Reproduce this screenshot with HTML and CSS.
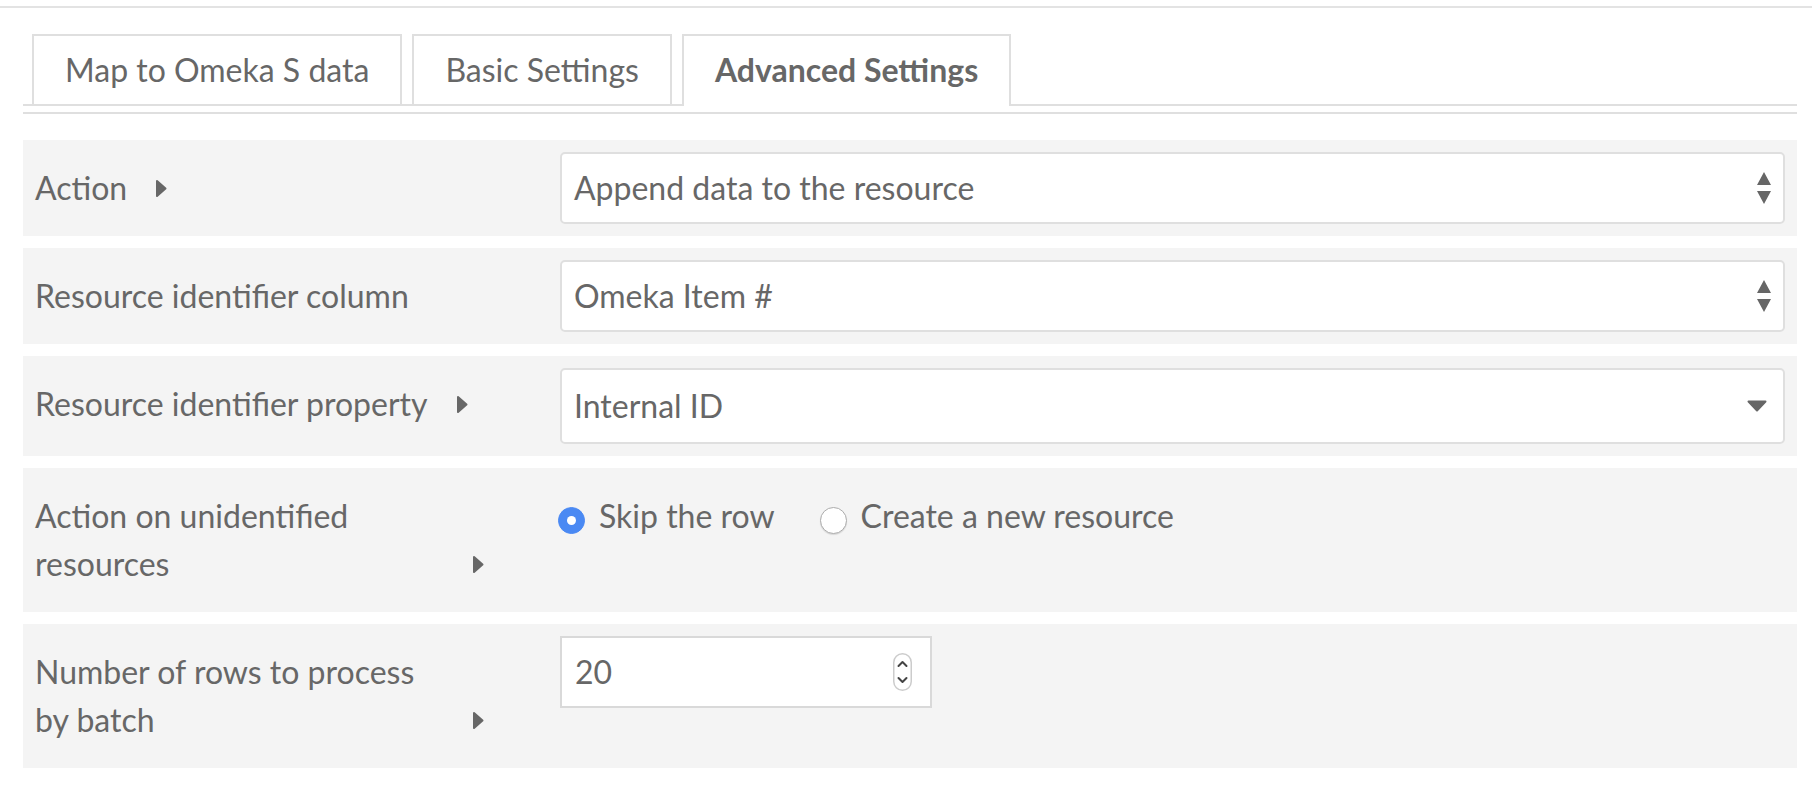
FILE: index.html
```html
<!DOCTYPE html>
<html lang="en">
<head>
<meta charset="utf-8">
<title>Advanced Settings</title>
<link rel="stylesheet" href="styles.css">
</head>
<body>
<div class="topbar"></div>
<div class="page">
  <ul class="tabs">
    <li class="tab">Map to Omeka S data</li>
    <li class="tab">Basic Settings</li>
    <li class="tab active">Advanced Settings</li>
  </ul>
  <div class="rule"></div>

  <div class="fields">
    <div class="field">
      <div class="meta">
        <label class="label">Action</label>
        <svg class="caret" viewBox="0 0 12 19" width="12" height="19"><path d="M2 2 L10.5 9.5 L2 17 Z"/></svg>
      </div>
      <div class="inputs">
        <div class="select">
          <span class="value">Append data to the resource</span>
          <svg class="updown" viewBox="0 0 16 34" width="16" height="34"><path d="M1 14 L8 1 L15 14 Z M1 20 L15 20 L8 33 Z"/></svg>
        </div>
      </div>
    </div>

    <div class="field">
      <div class="meta">
        <label class="label">Resource identifier column</label>
      </div>
      <div class="inputs">
        <div class="select">
          <span class="value">Omeka Item #</span>
          <svg class="updown" viewBox="0 0 16 34" width="16" height="34"><path d="M1 14 L8 1 L15 14 Z M1 20 L15 20 L8 33 Z"/></svg>
        </div>
      </div>
    </div>

    <div class="field">
      <div class="meta">
        <label class="label">Resource identifier property</label>
        <svg class="caret" viewBox="0 0 12 19" width="12" height="19"><path d="M2 2 L10.5 9.5 L2 17 Z"/></svg>
      </div>
      <div class="inputs">
        <div class="select chosen">
          <span class="value">Internal ID</span>
          <svg class="chevron" viewBox="0 0 20 12" width="20" height="12"><path d="M1.5 1.5 H18.5 L10 10.5 Z"/></svg>
        </div>
      </div>
    </div>

    <div class="field">
      <div class="meta">
        <label class="label">Action on unidentified resources</label>
        <svg class="caret" viewBox="0 0 12 19" width="12" height="19"><path d="M2 2 L10.5 9.5 L2 17 Z"/></svg>
      </div>
      <div class="inputs radios">
        <span class="option"><span class="radio checked"></span>Skip the row</span>
        <span class="option"><span class="radio"></span>Create a new resource</span>
      </div>
    </div>

    <div class="field">
      <div class="meta">
        <label class="label">Number of rows to process by batch</label>
        <svg class="caret" viewBox="0 0 12 19" width="12" height="19"><path d="M2 2 L10.5 9.5 L2 17 Z"/></svg>
      </div>
      <div class="inputs">
        <div class="number">
          <span class="value">20</span>
          <svg class="spinner" viewBox="0 0 19 38" width="19" height="38"><rect x="0.75" y="0.75" width="17.5" height="36.5" rx="8.75"/><path d="M5.5 13 L9.5 9 L13.5 13 M5.5 25 L9.5 29 L13.5 25"/></svg>
        </div>
      </div>
    </div>
  </div>
</div>
</body>
</html>
```

FILE: styles.css
```css
* { box-sizing: border-box; }

html, body {
  margin: 0;
  padding: 0;
  background: #ffffff;
}

body {
  font-family: Lato, "Open Sans", "Liberation Sans", sans-serif;
  color: #676767;
  font-size: 32px;
  line-height: 48px;
}

.topbar {
  margin-top: 6px;
  height: 2px;
  background: #e3e3e3;
}

.page {
  margin: 0 15px 0 23px;
}

.tabs {
  list-style: none;
  margin: 26px 0 0;
  padding: 0 0 0 9px;
  display: flex;
  align-items: flex-end;
  gap: 10px;
  border-bottom: 2px solid #dfdfdf;
}

.tab {
  font-size: 32px;
  line-height: 48px;
  padding: 10px 31px;
  border: 2px solid #dfdfdf;
  border-bottom: 0;
  background: #ffffff;
}

.tab.active {
  font-weight: 700;
  padding-bottom: 12px;
  margin-bottom: -2px;
}

.rule {
  margin-top: 6px;
  height: 2px;
  background: #dfdfdf;
}

.fields {
  margin-top: 26px;
}

.field {
  display: flex;
  background: #f4f4f4;
  padding: 12px;
  margin-bottom: 12px;
}

.meta {
  flex: 0 0 30%;
  align-self: flex-start;
  display: flex;
  align-items: flex-end;
  padding: 12px 76px 12px 0;
}

.label {
  min-width: 0;
}

.caret {
  flex: none;
  margin-left: 28px;
  margin-bottom: 14px;
}

.caret path {
  fill: #676767;
  stroke: #676767;
  stroke-width: 2;
  stroke-linejoin: round;
}

.inputs {
  flex: 1;
  min-width: 0;
}

.select {
  height: 72px;
  display: flex;
  align-items: center;
  padding: 0 11px 0 12px;
  background: #ffffff;
  border: 2px solid #dfdfdf;
  border-radius: 5px;
}

.select.chosen {
  height: 76px;
  padding-right: 16px;
}

.value {
  flex: 1;
  white-space: nowrap;
}

.updown path {
  fill: #666666;
}

.chevron path {
  fill: #666666;
  stroke: #666666;
  stroke-width: 2;
  stroke-linejoin: round;
}

.radios {
  display: flex;
  padding-top: 12px;
  gap: 47px;
}

.option {
  display: flex;
  align-items: flex-start;
  white-space: nowrap;
}

.radio {
  flex: none;
  width: 27px;
  height: 27px;
  margin: 15px 14px 0 -2px;
  border-radius: 50%;
  background: #ffffff;
  border: 1px solid #acacac;
  box-shadow: 0 1px 1px rgba(0, 0, 0, 0.12);
  position: relative;
}

.radio.checked {
  background: #4a89f3;
  border-color: #4a89f3;
  box-shadow: none;
}

.radio.checked::after {
  content: "";
  position: absolute;
  left: 50%;
  top: 50%;
  width: 9px;
  height: 9px;
  margin: -4.5px 0 0 -4.5px;
  border-radius: 50%;
  background: #ffffff;
}

.number {
  width: 372px;
  height: 72px;
  display: flex;
  align-items: center;
  padding: 0 18px 0 13px;
  background: #ffffff;
  border: 2px solid #d9d9d9;
}

.spinner rect {
  fill: #ffffff;
  stroke: #cccccc;
  stroke-width: 1.5;
}

.spinner path {
  fill: none;
  stroke: #444444;
  stroke-width: 2;
  stroke-linecap: round;
  stroke-linejoin: round;
}
```
